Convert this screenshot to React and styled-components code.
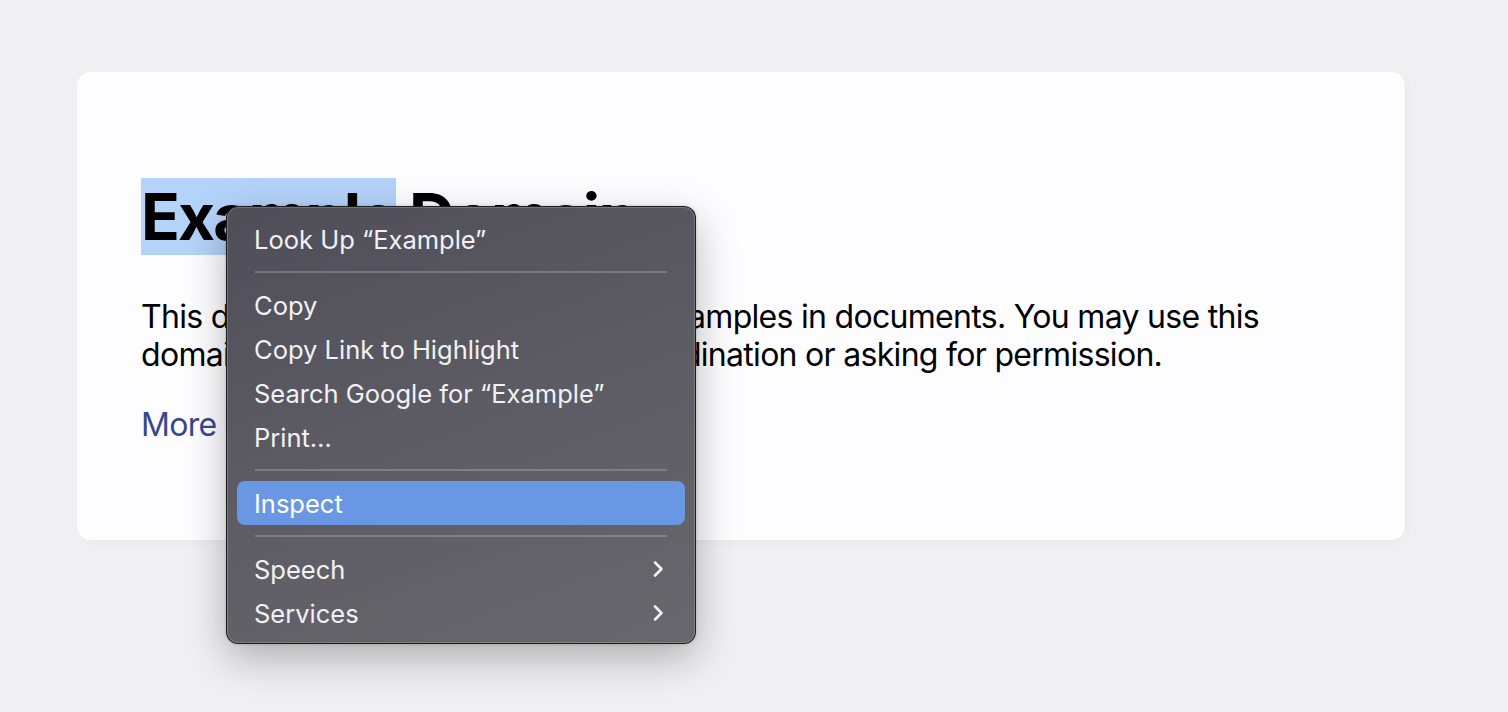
import React from 'react';
import styled, { createGlobalStyle } from 'styled-components';

const GlobalStyle = createGlobalStyle`
  html, body {
    margin: 0;
    padding: 0;
    background: #f0f0f2;
    font-family: Inter, "Liberation Sans", sans-serif;
  }
`;

const Page = styled.div`
  position: relative;
  width: 1508px;
  height: 712px;
  overflow: hidden;
  padding: 72px 0 0 77px;
  box-sizing: border-box;
`;

const Card = styled.div`
  width: 1328px;
  box-sizing: border-box;
  padding: 64px;
  background: #fdfdff;
  border-radius: 14px;
  box-shadow: 2px 3px 7px 2px rgba(0, 0, 0, 0.02);
`;

const Heading = styled.h1`
  margin: 43px 0;
  font-size: 64px;
  line-height: 76px;
  font-weight: 700;
  color: #000;
  letter-spacing: -1.8px;
`;

const Selected = styled.span`
  background: #b4d3f9;
`;

const Para = styled.p`
  margin: 0 0 32px;
  font-size: 32px;
  line-height: 38px;
  color: #000;
  letter-spacing: -0.7px;
`;

const Link = styled.a`
  color: #38488f;
  text-decoration: none;
`;

const Menu = styled.div`
  position: absolute;
  left: 226px;
  top: 206px;
  width: 470px;
  box-sizing: border-box;
  padding: 10px 10px 8px;
  border-radius: 12px;
  border: 1px solid rgba(20, 20, 22, 0.85);
  background: linear-gradient(160deg, #4f4e58 0%, #5c5b63 45%, #68676d 100%);
  box-shadow: inset 0 0 0 1px rgba(255, 255, 255, 0.18),
    0 14px 40px rgba(0, 0, 0, 0.28), 0 0 3px rgba(0, 0, 0, 0.2);
  display: flex;
  flex-direction: column;
`;

const Item = styled.div`
  height: 44px;
  display: flex;
  align-items: center;
  justify-content: space-between;
  padding: 0 20px 0 17px;
  border-radius: 8px;
  font-size: 25.5px;
  color: ${(p) => (p.$active ? '#ffffff' : '#f1f1f3')};
  background: ${(p) => (p.$active ? '#6a97e3' : 'transparent')};
`;

const Separator = styled.div`
  height: 22px;
  display: flex;
  align-items: center;
  padding: 0 18px;

  &::after {
    content: '';
    flex: 1;
    height: 2px;
    background: rgba(255, 255, 255, 0.2);
  }
`;

const Chevron = () => (
  <svg width="14" height="20" viewBox="0 0 14 20" fill="none">
    <path d="M4 3.5 L10.5 10 L4 16.5" stroke="#f1f1f3" strokeWidth="2.6" strokeLinecap="round" strokeLinejoin="round" />
  </svg>
);

const items = [
  { label: 'Look Up \u201CExample\u201D' },
  { sep: true },
  { label: 'Copy' },
  { label: 'Copy Link to Highlight' },
  { label: 'Search Google for \u201CExample\u201D' },
  { label: 'Print\u2026' },
  { sep: true },
  { label: 'Inspect', active: true },
  { sep: true },
  { label: 'Speech', sub: true },
  { label: 'Services', sub: true },
];

export default function App() {
  return (
    <>
      <GlobalStyle />
      <Page>
        <Card>
          <Heading>
            <Selected>Example</Selected> Domain
          </Heading>
          <Para>
            This domain is for use in illustrative examples in documents. You may use this
            domain in literature without prior coordination or asking for permission.
          </Para>
          <Para>
            <Link href="#">More information...</Link>
          </Para>
        </Card>
        <Menu>
          {items.map((it, i) =>
            it.sep ? (
              <Separator key={i} />
            ) : (
              <Item key={i} $active={it.active}>
                <span>{it.label}</span>
                {it.sub && <Chevron />}
              </Item>
            )
          )}
        </Menu>
      </Page>
    </>
  );
}
